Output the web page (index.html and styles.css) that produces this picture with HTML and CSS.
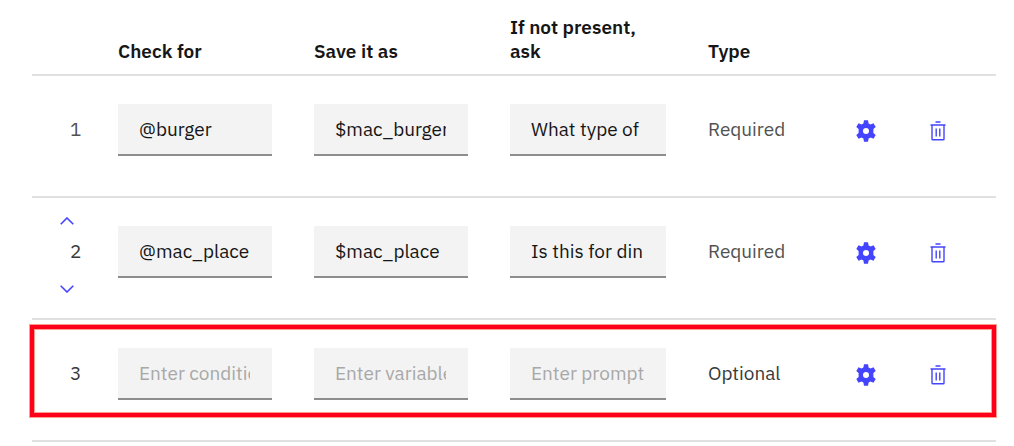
FILE: index.html
```html
<!DOCTYPE html>
<html lang="en">
<head>
<meta charset="utf-8">
<title>Slots</title>
<link rel="stylesheet" href="styles.css">
</head>
<body>
<svg class="sprite" aria-hidden="true">
  <symbol id="gear" viewBox="0 0 22 22">
    <path fill-rule="evenodd" d="M9 0.2h4l0.6 3.2 1.9 1.1 3-1.2 2.2 3.6-2.3 2.1v4l2.3 2.1-2.2 3.6-3-1.2-1.9 1.1-0.6 3.2h-4l-0.6-3.2-1.9-1.1-3 1.2-2.2-3.6 2.3-2.1v-4l-2.3-2.1 2.2-3.6 3 1.2 1.9-1.1zM11 8a3 3 0 1 0 0 6 3 3 0 0 0 0-6z"/>
  </symbol>
  <symbol id="trash" viewBox="0 0 16 20">
    <path d="M5.5 1h5M0.5 4h15M2 4v14q0 0.800 0.800 0.800h10.400q0.800 0 0.800-0.800V4M6.200 7.500v8M9.800 7.500v8"/>
  </symbol>
  <symbol id="up" viewBox="0 0 14 8"><path d="M0.700 7.300L7 1l6.300 6.300"/></symbol>
  <symbol id="down" viewBox="0 0 14 8"><path d="M0.700 0.700L7 7l6.300-6.300"/></symbol>
</svg>
<main class="page">
  <table class="slots">
    <colgroup>
      <col class="col-order"><col class="col-field"><col class="col-field"><col>
      <col class="col-type"><col class="col-settings"><col class="col-delete">
    </colgroup>
    <thead>
      <tr>
        <td></td>
        <th scope="col" id="check">Check for</th>
        <th scope="col" id="save">Save it as</th>
        <th scope="col" id="ask">If not present, ask</th>
        <th scope="col">Type</th>
        <td></td>
        <td></td>
      </tr>
    </thead>
    <tbody>
      <tr>
        <td class="order"><span class="number">1</span></td>
        <td><input class="field" type="text" aria-labelledby="check" value="@burger"></td>
        <td><input class="field" type="text" aria-labelledby="save" value="$mac_burger"></td>
        <td><input class="field" type="text" aria-labelledby="ask" value="What type of"></td>
        <td><span class="type">Required</span></td>
        <td class="action"><button class="icon-button" type="button" aria-label="Edit slot 1"><svg class="gear"><use href="#gear"/></svg></button></td>
        <td class="action last"><button class="icon-button" type="button" aria-label="Delete slot 1"><svg class="trash"><use href="#trash"/></svg></button></td>
      </tr>
      <tr>
        <td class="order">
          <div class="sorter">
            <button class="move" type="button" aria-label="Move up"><svg class="chevron"><use href="#up"/></svg></button>
            <span class="number">2</span>
            <button class="move" type="button" aria-label="Move down"><svg class="chevron"><use href="#down"/></svg></button>
          </div>
        </td>
        <td><input class="field" type="text" aria-labelledby="check" value="@mac_place"></td>
        <td><input class="field" type="text" aria-labelledby="save" value="$mac_place"></td>
        <td><input class="field" type="text" aria-labelledby="ask" value="Is this for din"></td>
        <td><span class="type">Required</span></td>
        <td class="action"><button class="icon-button" type="button" aria-label="Edit slot 2"><svg class="gear"><use href="#gear"/></svg></button></td>
        <td class="action last"><button class="icon-button" type="button" aria-label="Delete slot 2"><svg class="trash"><use href="#trash"/></svg></button></td>
      </tr>
      <tr class="highlighted">
        <td class="order"><span class="number">3</span></td>
        <td><input class="field" type="text" aria-labelledby="check" placeholder="Enter condition"></td>
        <td><input class="field" type="text" aria-labelledby="save" placeholder="Enter variable"></td>
        <td><input class="field" type="text" aria-labelledby="ask" placeholder="Enter prompt"></td>
        <td><span class="type">Optional</span></td>
        <td class="action"><button class="icon-button" type="button" aria-label="Edit slot 3"><svg class="gear"><use href="#gear"/></svg></button></td>
        <td class="action last"><button class="icon-button" type="button" aria-label="Delete slot 3"><svg class="trash"><use href="#trash"/></svg></button></td>
      </tr>
    </tbody>
  </table>
</main>
</body>
</html>
```
FILE: styles.css
```css
* { box-sizing: border-box; }

body {
  margin: 0;
  background: #fff;
  color: #161616;
  font: 19px/24px "IBM Plex Sans", "Noto Sans", sans-serif;
}

.sprite { display: none; }

.page { padding: 15px 18px 0 32px; }

.slots {
  width: 100%;
  border-collapse: separate;
  border-spacing: 0;
  table-layout: fixed;
}

.col-order { width: 86px; }
.col-field { width: 196px; }
.col-type { width: 122px; }
.col-settings { width: 72px; }
.col-delete { width: 94px; }

th, td {
  padding: 0 42px 0 0;
  border-bottom: 2px solid #e0e0e0;
  text-align: left;
}

th {
  padding-bottom: 11px;
  vertical-align: bottom;
  font-weight: 600;
}

tbody tr { position: relative; }

tbody td {
  height: 122px;
  padding-top: 28px;
  vertical-align: top;
}

tbody .order { padding: 0; }

.number {
  display: block;
  padding: 41px 0 0 38px;
  color: #525252;
}

.sorter {
  display: flex;
  flex-direction: column;
  align-items: flex-start;
  padding-top: 15px;
}

.sorter .number { padding-top: 10px; color: #393939; }

.move {
  display: flex;
  align-items: center;
  justify-content: center;
  width: 22px;
  height: 16px;
  margin-left: 24px;
  padding: 0;
  border: 0;
  background: none;
}

.sorter .number + .move { margin-top: 18px; }

.chevron {
  width: 14px;
  height: 8px;
  fill: none;
  stroke: #4444ff;
  stroke-width: 1.6;
}

.field {
  display: block;
  width: 100%;
  height: 52px;
  padding: 0 22px 0 21px;
  border: 0;
  border-bottom: 2px solid #8d8d8d;
  border-radius: 0;
  background: #f3f3f3;
  color: #161616;
  font: inherit;
  outline: 0;
}

.field::placeholder { color: #a8a8a8; opacity: 1; }

.type {
  display: block;
  padding-top: 13px;
  color: #525252;
}

.action { padding-right: 0; }
.action.last { padding-right: 22px; }

.icon-button {
  display: flex;
  align-items: center;
  justify-content: center;
  width: 100%;
  height: 54px;
  padding: 0;
  border: 0;
  background: none;
}

.gear {
  width: 22px;
  height: 22px;
  fill: #4444ff;
}

.trash {
  width: 16px;
  height: 20px;
  fill: none;
  stroke: #4444ff;
  stroke-width: 1.4;
}

.highlighted .number,
.highlighted .type { color: #393939; }

.highlighted .last::after {
  content: "";
  position: absolute;
  inset: 5px 0 25px -2px;
  border: 4px solid #ff001a;
  box-shadow: 0 0 0 1px #ff9c90, inset 0 0 0 1px #ff9c90;
  pointer-events: none;
}
```
